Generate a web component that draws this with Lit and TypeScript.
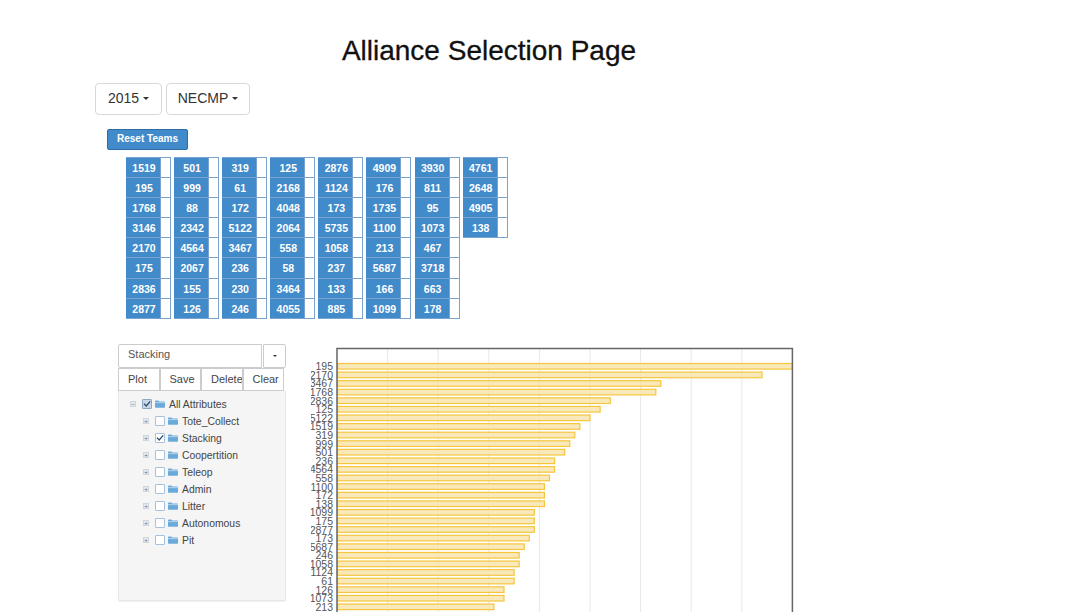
import { LitElement, html, css, svg } from 'lit';
import { customElement, state } from 'lit/decorators.js';

const ALLIANCES = [
  [1519, 195, 1768, 3146, 2170, 175, 2836, 2877],
  [501, 999, 88, 2342, 4564, 2067, 155, 126],
  [319, 61, 172, 5122, 3467, 236, 230, 246],
  [125, 2168, 4048, 2064, 558, 58, 3464, 4055],
  [2876, 1124, 173, 5735, 1058, 237, 133, 885],
  [4909, 176, 1735, 1100, 213, 5687, 166, 1099],
  [3930, 811, 95, 1073, 467, 3718, 663, 178],
  [4761, 2648, 4905, 138],
];

// team, value in gridline units (1 unit = one vertical rule)
const BARS: [number, number][] = [
  [195, 9], [2170, 8.4], [3467, 6.4], [1768, 6.3], [2836, 5.4], [125, 5.2], [5122, 5],
  [1519, 4.8], [319, 4.7], [999, 4.6], [501, 4.5], [236, 4.3], [4564, 4.3], [558, 4.2],
  [1100, 4.1], [172, 4.1], [138, 4.1], [1099, 3.9], [175, 3.9], [2877, 3.9], [173, 3.8],
  [5687, 3.7], [246, 3.6], [1058, 3.6], [1124, 3.5], [61, 3.5], [126, 3.3], [1073, 3.3],
  [213, 3.1],
];

const ATTRIBUTES = [
  { name: 'Tote_Collect', checked: false },
  { name: 'Stacking', checked: true },
  { name: 'Coopertition', checked: false },
  { name: 'Teleop', checked: false },
  { name: 'Admin', checked: false },
  { name: 'Litter', checked: false },
  { name: 'Autonomous', checked: false },
  { name: 'Pit', checked: false },
];

const UNIT = 50.6;
const ROW = 8.59;

@customElement('app-root')
export class AppRoot extends LitElement {
  @state() year = '2015';
  @state() event = 'NECMP';

  static override styles = css`
    :host {
      display: block;
      height: 612px;
      overflow: hidden;
      box-sizing: border-box;
      padding: 0 0 0 95px;
      font-family: "Liberation Sans", Arial, sans-serif;
      color: #333;
      background: #fff;
    }
    .title {
      width: 788px;
      margin: 0;
      padding-top: 36px;
      font-size: 28px;
      line-height: 30px;
      font-weight: 400;
      text-align: center;
      color: #111;
      -webkit-text-stroke: 0.3px #111;
    }
    .pickers {
      display: flex;
      gap: 4px;
      margin-top: 17px;
    }
    .picker {
      display: flex;
      align-items: center;
      justify-content: center;
      gap: 4px;
      box-sizing: border-box;
      height: 32px;
      padding-bottom: 2px;
      border: 1.5px solid #d8d8d8;
      border-radius: 4px;
      font-size: 14px;
      color: #333;
      background: #fff;
    }
    .picker.year { width: 67px; }
    .picker.event { width: 84px; }
    .caret {
      width: 0;
      height: 0;
      border-left: 3px solid transparent;
      border-right: 3px solid transparent;
      border-top: 3px solid #333;
    }
    .reset {
      display: block;
      box-sizing: border-box;
      width: 81px;
      height: 21px;
      margin: 14px 0 0 12px;
      padding: 0 0 1px;
      border: 1px solid #2e6da4;
      border-radius: 2px;
      background: #428bca;
      color: #fff;
      font: 600 10px/18px "Liberation Sans", Arial, sans-serif;
      text-align: center;
    }
    .alliances {
      display: flex;
      align-items: flex-start;
      gap: 3.1px;
      margin: 7px 0 0 31px;
    }
    .alliance {
      display: flex;
      flex-direction: column;
      width: 45px;
      border-bottom: 1px solid #7aa3cf;
    }
    .slot {
      display: flex;
      height: 20.1px;
      box-sizing: border-box;
      border: 1px solid #7aa3cf;
      border-width: 1px 1px 0 0;
      background: #fff;
    }
    .team {
      box-sizing: border-box;
      width: 35px;
      padding-left: 2px;
      background: #428bca;
      border-right: 1px solid #7aa3cf;
      color: #fff;
      font-size: 10.5px;
      font-weight: 600;
      line-height: 21px;
      text-align: center;
    }
    .lower {
      display: flex;
      align-items: flex-start;
      margin: 25px 0 0 23px;
    }
    .side {
      width: 168px;
      flex: none;
    }
    .search {
      display: flex;
      height: 24px;
      gap: 1px;
    }
    .search-input {
      box-sizing: border-box;
      width: 144px;
      border: 1px solid #ccc;
      border-radius: 2px 0 0 2px;
      padding-left: 9px;
      font-size: 11px;
      line-height: 19px;
      color: #555;
    }
    .search-toggle {
      display: flex;
      align-items: center;
      justify-content: center;
      box-sizing: border-box;
      width: 23px;
      border: 1px solid #ccc;
      border-radius: 0 2px 2px 0;
    }
    .search-toggle .caret {
      border-left-width: 2px;
      border-right-width: 2px;
      border-top-width: 2px;
    }
    .actions {
      display: flex;
      height: 23px;
      box-sizing: border-box;
    }
    .action {
      box-sizing: border-box;
      width: 41.5px;
      padding-left: 9px;
      border: 1px solid #ccc;
      font-size: 11px;
      line-height: 21px;
      color: #444;
      white-space: nowrap;
      overflow: hidden;
    }
    .tree {
      box-sizing: border-box;
      height: 210px;
      padding: 5px 0 0 11px;
      background: #f5f5f5;
      border: 1px solid #e6e6e6;
      border-top: none;
      border-radius: 0 0 2px 2px;
      box-shadow: 0 1px 1px rgba(0, 0, 0, 0.06);
    }
    .node {
      display: flex;
      align-items: center;
      height: 17px;
      font-size: 10.4px;
      color: #444;
    }
    .node.child { padding-left: 13px; }
    .toggle {
      display: flex;
      align-items: center;
      justify-content: center;
      box-sizing: border-box;
      width: 6px;
      height: 6px;
      border: 1px solid #cfd6dc;
      background: #e6e9ec;
      font-size: 6px;
      line-height: 1;
      color: #668;
    }
    .check {
      box-sizing: border-box;
      width: 10px;
      height: 10px;
      margin-left: 6px;
      border: 1px solid #a9c2dc;
      border-radius: 1px;
      background: #fff;
      flex: none;
    }
    .check svg { display: block; }
    .check.root { background: #cbd7e4; border-color: #8fa9c4; }
    .folder { margin: 0 4px 0 3px; flex: none; }
    .chart { margin: 2px 0 0 25px; flex: none; display: block; }
    .tick { font-size: 10.5px; fill: #555; text-anchor: end; }
  `;

  private renderFolder() {
    return html`<svg class="folder" width="10" height="8" viewBox="0 0 10 8">
      <path d="M0 1.2 Q0 .4 .8 .4 H3.2 L4.2 1.4 H9.2 Q10 1.4 10 2.2 V7 Q10 7.8 9.2 7.8 H.8 Q0 7.8 0 7 Z" fill="#6aa9d8"></path>
      <rect x="0" y="2.4" width="10" height=".7" fill="#d3e6f5"></rect>
    </svg>`;
  }

  private renderNode(name: string, checked: boolean, root = false) {
    return html`<div class="node ${root ? '' : 'child'}">
      <span class="toggle">${root ? '−' : '+'}</span>
      <span class="check ${root ? 'root' : ''}">
        ${checked
          ? html`<svg width="8" height="8" viewBox="0 0 8 8"><path d="M1 3.6 L3.2 6 L7.2 1.4" fill="none" stroke="#2b4a6f" stroke-width="1.3"></path></svg>`
          : ''}
      </span>
      ${this.renderFolder()}
      <span>${name}</span>
    </div>`;
  }

  private renderChart() {
    const left = 26;
    const top = 2.5;
    const width = 9 * UNIT;
    return html`<svg class="chart" width="490" height="266" viewBox="0 0 490 266">
      ${[1, 2, 3, 4, 5, 6, 7, 8].map(
        (i) => svg`<line x1=${left + i * UNIT} x2=${left + i * UNIT} y1=${top} y2="266" stroke="#e8e8e8" stroke-width="1"></line>`
      )}
      ${BARS.map(([team, value], i) => {
        const y = 17.5 + i * ROW;
        return svg`
          <rect x=${left + 0.5} y=${y} width=${value * UNIT - 0.5} height="5.6" fill="#f8e4ae" fill-opacity="0.85" stroke="#f5c63c" stroke-width="1.2"></rect>
          <text class="tick" x=${left - 4} y=${y + 6.8}>${team}</text>`;
      })}
      <path d="M${left} 266 V${top} H${left + width} V266" fill="none" stroke="#666" stroke-width="1.5"></path>
    </svg>`;
  }

  override render() {
    return html`
      <h1 class="title">Alliance Selection Page</h1>
      <div class="pickers">
        <div class="picker year">${this.year} <span class="caret"></span></div>
        <div class="picker event">${this.event} <span class="caret"></span></div>
      </div>
      <button class="reset">Reset Teams</button>
      <div class="alliances">
        ${ALLIANCES.map(
          (teams) => html`<div class="alliance">
            ${teams.map((t) => html`<div class="slot"><div class="team">${t}</div></div>`)}
          </div>`
        )}
      </div>
      <div class="lower">
        <div class="side">
          <div class="search">
            <div class="search-input">Stacking</div>
            <div class="search-toggle"><span class="caret"></span></div>
          </div>
          <div class="actions">
            ${['Plot', 'Save', 'Delete', 'Clear'].map((a) => html`<div class="action">${a}</div>`)}
          </div>
          <div class="tree">
            ${this.renderNode('All Attributes', true, true)}
            ${ATTRIBUTES.map((a) => this.renderNode(a.name, a.checked))}
          </div>
        </div>
        ${this.renderChart()}
      </div>
    `;
  }
}
